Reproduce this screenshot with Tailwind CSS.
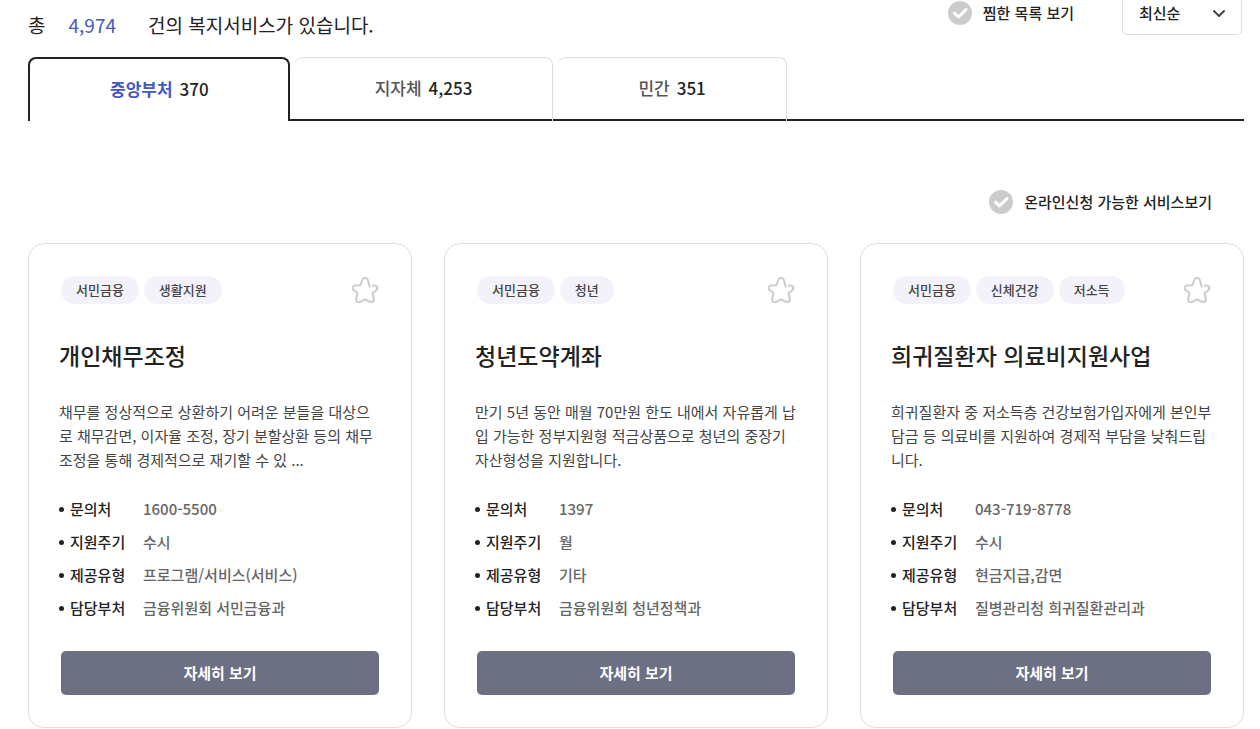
<!DOCTYPE html>
<html lang="ko">
<head>
<meta charset="utf-8">
<meta name="viewport" content="width=device-width, initial-scale=1">
<title>복지서비스</title>
<script src="https://cdn.jsdelivr.net/npm/@tailwindcss/browser@4"></script>
</head>
<body class="bg-white font-['Noto_Sans_CJK_KR','Noto_Sans',sans-serif] text-[15px] leading-6 text-[#222]">
<svg class="hidden" aria-hidden="true">
  <symbol id="star" viewBox="0 0 28 28"><path d="M18.6 10.4 C18 8.6 17.5 6 16.9 4.3 C16.2 1.3 11.8 1.3 11.1 4.3 L9.9 8 C9.7 8.9 9.2 9.3 8.3 9.3 L4.4 9.4 C1.4 9.6 0.6 12.8 3 14.5 L5.6 16.3 C6.4 16.9 6.6 17.5 6.3 18.4 L5.2 22.4 C4.5 25.3 7.2 27.2 9.7 25.7 L12.9 23.9 C13.7 23.5 14.3 23.5 15.1 23.9 L18.3 25.7 C20.8 27.2 23.5 25.3 22.8 22.4 L21.7 18.4 C21.4 17.5 21.6 16.9 22.4 16.3 L25 14.5 C27.4 12.8 26.6 9.4 23.6 9.4 L22 9.4" fill="none" stroke="#ccc" stroke-width="2" stroke-linecap="round" stroke-linejoin="round"/></symbol>
  <symbol id="check" viewBox="0 0 24 24"><path d="M6.5 12.2 L10.5 16 L18 8.6" fill="none" stroke="#fff" stroke-width="3" stroke-linecap="round" stroke-linejoin="round"/></symbol>
</svg>
<main class="pl-7 pr-4">
  <header class="flex items-start justify-between">
    <p class="mt-[7px] flex text-[19px] leading-9"><span>총</span><span class="ml-[23px] text-[#4558be]">4,974</span><span class="ml-8">건의 복지서비스가 있습니다.</span></p>
    <div class="flex items-start pr-[2px]">
      <label class="mt-px mr-12 flex items-center gap-[11px] font-medium">
        <span class="relative size-6"><input type="checkbox" class="block size-6 appearance-none rounded-full bg-[#ccc] checked:bg-[#4558be]"><svg class="pointer-events-none absolute inset-0 size-6"><use href="#check"/></svg></span>
        <span>찜한 목록 보기</span>
      </label>
      <div class="relative">
        <select aria-label="정렬" class="block h-[35px] w-[120px] appearance-none rounded-b-[5px] border border-t-0 border-[#ddd] bg-white pb-2 pl-4 font-medium"><option>최신순</option></select>
        <svg class="pointer-events-none absolute top-[9px] right-[17px] h-[10px] w-[12px]" viewBox="0 0 12 10"><path d="M1 2 L6 7 L11 2" fill="none" stroke="#444" stroke-width="2" stroke-linecap="round" stroke-linejoin="round"/></svg>
      </div>
    </div>
  </header>
  <nav class="mt-[14px] flex h-16 gap-[5px] border-b-2 border-[#222] text-[17px] font-medium">
    <a href="#central" class="-mb-[2px] flex items-center gap-[7px] rounded-t-lg border-2 border-b-0 border-[#222] bg-white pr-[79px] pb-[2px] pl-20"><strong class="font-bold text-[#4558be]">중앙부처</strong><span>370</span></a>
    <a href="#local" class="-mb-[2px] flex items-center gap-[7px] rounded-t-lg border-t border-r border-[#ddd] px-20 pb-[3px]"><span class="text-[#555]">지자체</span><span>4,253</span></a>
    <a href="#private" class="-mb-[2px] flex items-center gap-[7px] rounded-t-lg border-t border-r border-[#ddd] px-20 pb-[3px]"><span class="text-[#555]">민간</span><span>351</span></a>
  </nav>
  <div class="mt-[69px] flex justify-end pr-8">
    <label class="flex items-center gap-[11px] font-medium">
      <span class="relative size-6"><input type="checkbox" class="block size-6 appearance-none rounded-full bg-[#ccc] checked:bg-[#4558be]"><svg class="pointer-events-none absolute inset-0 size-6"><use href="#check"/></svg></span>
      <span>온라인신청 가능한 서비스보기</span>
    </label>
  </div>
  <section class="mt-[29px] grid grid-cols-3 gap-8">
    <article class="flex flex-col rounded-2xl border border-[#ddd] px-[30px] py-8">
      <div class="mx-[2px] flex items-start justify-between">
        <ul class="flex gap-[5px] text-[13px] leading-7 font-medium text-[#444]"><li class="rounded-full bg-[#f3f2fb] px-[15px]">서민금융</li><li class="rounded-full bg-[#f3f2fb] px-[15px]">생활지원</li></ul>
        <button type="button" aria-label="찜하기"><svg class="size-7"><use href="#star"/></svg></button>
      </div>
      <h2 class="mt-[33px] text-[23px] leading-9 font-medium">개인채무조정</h2>
      <p class="mt-[27px] text-[#444]">채무를 정상적으로 상환하기 어려운 분들을 대상으로 채무감면, 이자율 조정, 장기 분할상환 등의 채무조정을 통해 경제적으로 재기할 수 있 ...</p>
      <dl class="mt-[25px] flex flex-col gap-[9px] font-medium text-[#666]">
        <div class="flex items-center"><span class="size-[5px] rounded-full bg-[#222]"></span><dt class="ml-[6px] w-[73px] text-[#222]">문의처</dt><dd>1600-5500</dd></div>
        <div class="flex items-center"><span class="size-[5px] rounded-full bg-[#222]"></span><dt class="ml-[6px] w-[73px] text-[#222]">지원주기</dt><dd>수시</dd></div>
        <div class="flex items-center"><span class="size-[5px] rounded-full bg-[#222]"></span><dt class="ml-[6px] w-[73px] text-[#222]">제공유형</dt><dd>프로그램/서비스(서비스)</dd></div>
        <div class="flex items-center"><span class="size-[5px] rounded-full bg-[#222]"></span><dt class="ml-[6px] w-[73px] text-[#222]">담당부처</dt><dd>금융위원회 서민금융과</dd></div>
      </dl>
      <button type="button" class="mx-[2px] mt-[31px] h-11 rounded-[5px] bg-[#6d6f82] font-bold text-white">자세히 보기</button>
    </article>
    <article class="flex flex-col rounded-2xl border border-[#ddd] px-[30px] py-8">
      <div class="mx-[2px] flex items-start justify-between">
        <ul class="flex gap-[5px] text-[13px] leading-7 font-medium text-[#444]"><li class="rounded-full bg-[#f3f2fb] px-[15px]">서민금융</li><li class="rounded-full bg-[#f3f2fb] px-[15px]">청년</li></ul>
        <button type="button" aria-label="찜하기"><svg class="size-7"><use href="#star"/></svg></button>
      </div>
      <h2 class="mt-[33px] text-[23px] leading-9 font-medium">청년도약계좌</h2>
      <p class="mt-[27px] text-[#444]">만기 5년 동안 매월 70만원 한도 내에서 자유롭게 납입 가능한 정부지원형 적금상품으로 청년의 중장기 자산형성을 지원합니다.</p>
      <dl class="mt-[25px] flex flex-col gap-[9px] font-medium text-[#666]">
        <div class="flex items-center"><span class="size-[5px] rounded-full bg-[#222]"></span><dt class="ml-[6px] w-[73px] text-[#222]">문의처</dt><dd>1397</dd></div>
        <div class="flex items-center"><span class="size-[5px] rounded-full bg-[#222]"></span><dt class="ml-[6px] w-[73px] text-[#222]">지원주기</dt><dd>월</dd></div>
        <div class="flex items-center"><span class="size-[5px] rounded-full bg-[#222]"></span><dt class="ml-[6px] w-[73px] text-[#222]">제공유형</dt><dd>기타</dd></div>
        <div class="flex items-center"><span class="size-[5px] rounded-full bg-[#222]"></span><dt class="ml-[6px] w-[73px] text-[#222]">담당부처</dt><dd>금융위원회 청년정책과</dd></div>
      </dl>
      <button type="button" class="mx-[2px] mt-[31px] h-11 rounded-[5px] bg-[#6d6f82] font-bold text-white">자세히 보기</button>
    </article>
    <article class="flex flex-col rounded-2xl border border-[#ddd] px-[30px] py-8">
      <div class="mx-[2px] flex items-start justify-between">
        <ul class="flex gap-[5px] text-[13px] leading-7 font-medium text-[#444]"><li class="rounded-full bg-[#f3f2fb] px-[15px]">서민금융</li><li class="rounded-full bg-[#f3f2fb] px-[15px]">신체건강</li><li class="rounded-full bg-[#f3f2fb] px-[15px]">저소득</li></ul>
        <button type="button" aria-label="찜하기"><svg class="size-7"><use href="#star"/></svg></button>
      </div>
      <h2 class="mt-[33px] text-[23px] leading-9 font-medium">희귀질환자 의료비지원사업</h2>
      <p class="mt-[27px] text-[#444]">희귀질환자 중 저소득층 건강보험가입자에게 본인부담금 등 의료비를 지원하여 경제적 부담을 낮춰드립니다.</p>
      <dl class="mt-[25px] flex flex-col gap-[9px] font-medium text-[#666]">
        <div class="flex items-center"><span class="size-[5px] rounded-full bg-[#222]"></span><dt class="ml-[6px] w-[73px] text-[#222]">문의처</dt><dd>043-719-8778</dd></div>
        <div class="flex items-center"><span class="size-[5px] rounded-full bg-[#222]"></span><dt class="ml-[6px] w-[73px] text-[#222]">지원주기</dt><dd>수시</dd></div>
        <div class="flex items-center"><span class="size-[5px] rounded-full bg-[#222]"></span><dt class="ml-[6px] w-[73px] text-[#222]">제공유형</dt><dd>현금지급,감면</dd></div>
        <div class="flex items-center"><span class="size-[5px] rounded-full bg-[#222]"></span><dt class="ml-[6px] w-[73px] text-[#222]">담당부처</dt><dd>질병관리청 희귀질환관리과</dd></div>
      </dl>
      <button type="button" class="mx-[2px] mt-[31px] h-11 rounded-[5px] bg-[#6d6f82] font-bold text-white">자세히 보기</button>
    </article>
  </section>
</main>
</body>
</html>
